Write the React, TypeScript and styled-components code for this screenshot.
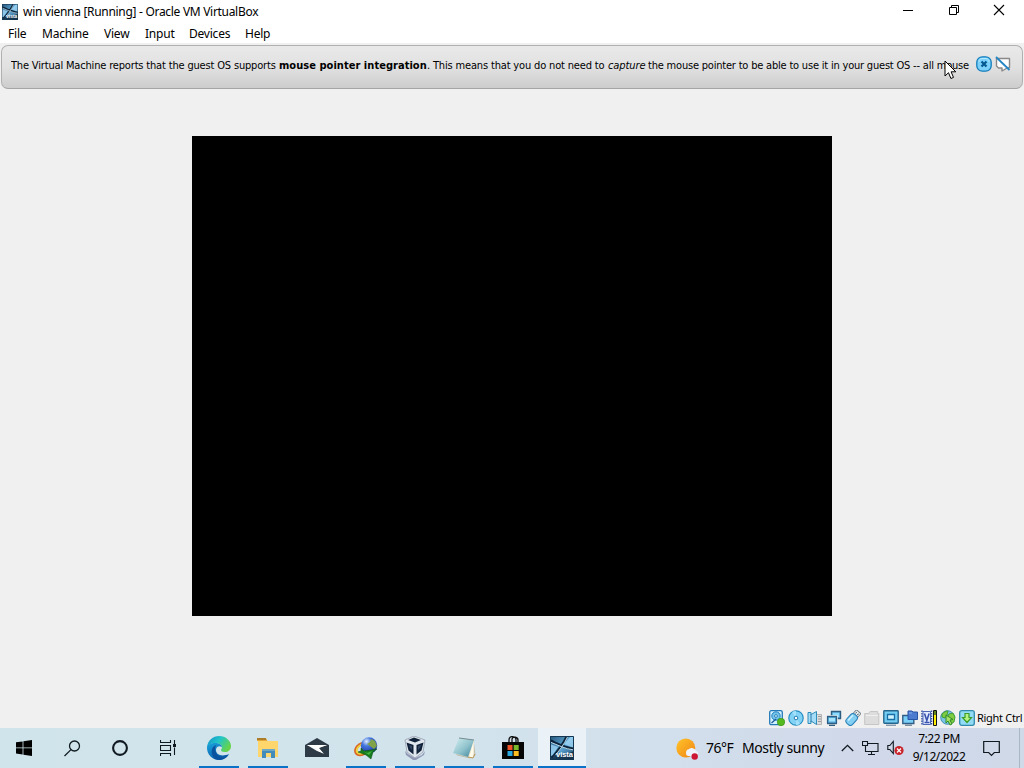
import React from 'react';
import styled, { createGlobalStyle } from 'styled-components';

const GlobalStyle = createGlobalStyle`
  * {
    box-sizing: border-box;
  }
  body {
    margin: 0;
    overflow: hidden;
    background: #f0f0f0;
    font-family: 'Noto Sans', 'Open Sans', sans-serif;
    color: #000;
  }
  svg {
    display: block;
    flex: none;
  }
`;

const Desktop = styled.div`
  width: 1024px;
  height: 768px;
  display: flex;
  flex-direction: column;
  position: relative;
  overflow: hidden;
`;

const TitleBar = styled.header`
  height: 23px;
  flex: none;
  display: flex;
  align-items: center;
  padding: 0 2px;
  background: #fff;
`;

const Title = styled.div`
  flex: 1;
  margin-left: 5px;
  font-size: 12px;
  line-height: 23px;
  letter-spacing: -0.3px;
  white-space: nowrap;
`;

const WindowButton = styled.button`
  width: 45.5px;
  height: 20px;
  margin-bottom: 3px;
  padding: 0;
  border: none;
  background: transparent;
  display: flex;
  align-items: center;
  justify-content: center;
`;

const MenuBar = styled.nav`
  height: 20px;
  flex: none;
  display: flex;
  margin-bottom: 2px;
  padding-left: 8px;
  background: #fff;
`;

const MenuItem = styled.div<{ $width: number }>`
  width: ${(p) => p.$width}px;
  font-size: 12px;
  line-height: 22px;
  letter-spacing: -0.22px;
  white-space: nowrap;
`;

const MessageBar = styled.div`
  height: 44px;
  flex: none;
  margin: 0 1px;
  padding: 0 10px 0 9px;
  display: flex;
  align-items: flex-start;
  border: 1px solid #b0b0b0;
  border-bottom-color: #a5a5a5;
  border-radius: 7px;
  background: linear-gradient(#e9e9e9, #e1e1e1 50%, #cdcdcd);
`;

const MessageText = styled.div`
  width: 965px;
  height: 38px;
  display: flex;
  overflow: hidden;
  font-family: 'DejaVu Sans Condensed', 'DejaVu Sans', sans-serif;
  font-stretch: condensed;
  font-size: 11px;
  line-height: 39px;
  white-space: nowrap;
`;

const Segment = styled.span<{ $width: number; $spacing: number; $bold?: boolean; $italic?: boolean }>`
  flex: none;
  width: ${(p) => p.$width}px;
  letter-spacing: ${(p) => p.$spacing}px;
  font-weight: ${(p) => (p.$bold ? 700 : 400)};
  font-style: ${(p) => (p.$italic ? 'italic' : 'normal')};
`;

const MessageActions = styled.div`
  display: flex;
  gap: 3px;
  padding-top: 10px;
`;

const Viewport = styled.main`
  flex: 1;
  display: flex;
  justify-content: center;
  align-items: flex-start;
  padding-top: 47px;
  background: #f0f0f0;
`;

const GuestScreen = styled.div`
  width: 640px;
  height: 480px;
  background: #000;
`;

const StatusBar = styled.div`
  height: 20px;
  flex: none;
  display: flex;
  justify-content: flex-end;
  align-items: center;
  gap: 3px;
  padding-right: 1px;
  background: #f0f0f0;
`;

const HostKey = styled.span`
  width: 46px;
  margin-left: -1px;
  font-size: 11px;
  line-height: 20px;
  letter-spacing: -0.3px;
  white-space: nowrap;
`;

const Taskbar = styled.footer`
  height: 40px;
  flex: none;
  display: flex;
  background: linear-gradient(90deg, #d0e4eb 0%, #d2e3ec 45%, #d2dfec 65%, #d0d8e9 85%, #cfd9e8 100%);
`;

const SystemButton = styled.div`
  width: 48px;
  height: 40px;
  display: flex;
  align-items: center;
  justify-content: center;
`;

const AppButton = styled.div<{ $running?: boolean; $active?: boolean }>`
  width: ${(p) => (p.$active ? 48 : 40)}px;
  margin-right: ${(p) => (p.$active ? 0 : 9)}px;
  margin-left: ${(p) => (p.$active ? -4 : 0)}px;
  height: 40px;
  padding-top: 2px;
  display: flex;
  align-items: center;
  justify-content: center;
  border-bottom: 2px solid ${(p) => (p.$running ? '#0a73c7' : 'transparent')};
  background: ${(p) => (p.$active ? '#eaf2f7' : 'transparent')};
`;

const AppList = styled.div`
  display: flex;
  flex: 1;
  padding-left: 7px;
`;

const Tray = styled.div`
  display: flex;
  align-items: center;
  width: 348px;
  height: 40px;
`;

const Weather = styled.div`
  width: 165px;
  display: flex;
  align-items: center;
  font-size: 14px;
  line-height: 42px;
  white-space: nowrap;
`;

const Temperature = styled.span`
  width: 36px;
  margin-left: 7px;
  letter-spacing: -0.5px;
`;

const Condition = styled.span`
  letter-spacing: -0.4px;
`;

const TrayIcons = styled.div`
  display: flex;
  align-items: center;
  gap: 8px;
  width: 66px;
`;

const Clock = styled.div`
  width: 64px;
  font-size: 12px;
  line-height: 18px;
  letter-spacing: -0.48px;
  text-align: center;
  white-space: nowrap;
`;

const Notifications = styled.div`
  width: 38px;
  margin-left: 1px;
  display: flex;
  justify-content: center;
`;

const ShowDesktop = styled.div`
  width: 5px;
  height: 40px;
  margin-left: auto;
  border-left: 1px solid #a9b8c6;
`;

const Pointer = styled.svg`
  position: absolute;
  left: 944px;
  top: 60px;
`;

const VistaIcon = ({ size }: { size: number }) => (
  <svg width={size} height={size} viewBox="0 0 24 24">
    <defs>
      <linearGradient id={`vista${size}`} x1="0" y1="0" x2="1" y2="1">
        <stop offset="0" stopColor="#255478" />
        <stop offset="0.5" stopColor="#5ba6d5" />
        <stop offset="1" stopColor="#173d5d" />
      </linearGradient>
    </defs>
    <rect width="24" height="24" fill={`url(#vista${size})`} />
    <path d="M0 8 8 11 2 20H0ZM14 8 21 0H24V12Z" fill="#a5daf8" opacity="0.75" />
    <path d="M0 4.5C8 8 15 12 24 13M2 22C8 15 13 9 17 0" fill="none" stroke="#0b2439" strokeWidth="2.6" />
    <path d="M0 6C8 9 15 13 24 14M3 22C9 15 14 9 18 0" fill="none" stroke="#d4efff" strokeWidth="0.9" />
    <path d="M0 20C8 18 17 19 24 15V24H0Z" fill="#102b45" opacity="0.85" />
    <text x="6" y="21" fill="#fff" fontFamily="Liberation Sans" fontSize="7.5" fontWeight="700" textLength="17">vista</text>
    <path d="M.5.5h23v23H.5z" fill="none" stroke="#143650" />
  </svg>
);

const MinimizeIcon = () => (
  <svg width="12" height="12"><path d="M1 6.5h10" stroke="#000" /></svg>
);

const RestoreIcon = () => (
  <svg width="12" height="12" fill="none" stroke="#000">
    <path d="M1.5 3.5h7v7h-7zM3.5 3.5v-2h7v7h-2" />
  </svg>
);

const CloseIcon = () => (
  <svg width="12" height="12"><path d="m1 1 10 10M11 1 1 11" stroke="#000" strokeWidth="1.1" /></svg>
);

const DismissIcon = () => (
  <svg width="16" height="16">
    <rect x="0.8" y="0.8" width="14.4" height="14.4" rx="5.5" fill="#7dd1fa" stroke="#147dbb" strokeWidth="1.3" />
    <path d="M3 6c0-2 1-3.5 3-3.5h4c2 0 3 1.5 3 3.5" fill="none" stroke="#b4e9ff" />
    <path d="m5.5 5.5 5 5M10.5 5.5l-5 5" stroke="#075a91" strokeWidth="2.3" />
  </svg>
);

const MuteMessageIcon = () => (
  <svg width="16" height="16">
    <path d="M1.5 2.5h13v9l-2.5.5-5 3v-3H3.5l-2-2z" fill="#fff" stroke="#898989" strokeWidth="1.4" strokeLinejoin="round" />
    <path d="m1 1 13.5 13" stroke="#2486c5" strokeWidth="1.8" />
  </svg>
);

const HardDiskIcon = () => (
  <svg width="16" height="16">
    <rect x="0.7" y="0.7" width="12.6" height="14" rx="1.5" fill="#d3f1ff" stroke="#247ab6" strokeWidth="1.3" />
    <circle cx="7" cy="6" r="4.2" fill="#75c6ee" stroke="#237fb9" />
    <circle cx="7" cy="6" r="1.4" fill="#fff" stroke="#237fb9" />
    <path d="M2.5 13 7 9" stroke="#1e5a99" strokeWidth="1.4" />
    <circle cx="12" cy="12" r="3.7" fill="#55ba20" stroke="#389214" strokeWidth="0.7" />
  </svg>
);

const OpticalIcon = () => (
  <svg width="16" height="16">
    <circle cx="8" cy="8" r="7.2" fill="#82d2f5" stroke="#278dc4" strokeWidth="1.2" />
    <path d="M8 8 4 2a7 7 0 0 1 4-1zM8 8l4 6a7 7 0 0 1-4 1z" fill="#a5e0fa" />
    <circle cx="8" cy="8" r="1.8" fill="#fff" stroke="#287eb2" />
  </svg>
);

const AudioIcon = () => (
  <svg width="16" height="16">
    <path d="M9.5 4.5h5v10h-5z" fill="#ddd" stroke="#b5b5b5" />
    <path d="M11 6.5h3M11 9h3M11 11.5h3" stroke="#999" />
    <path d="M1 2.5h3v2l5.5-3v13L4 11v2.5H1z" fill="#a5dcf7" stroke="#2f8dbc" />
    <path d="M4 4v8" stroke="#2d7cab" />
  </svg>
);

const NetworkIcon = () => (
  <svg width="16" height="16">
    <path d="M5.5 1.5h9v7h-9zM10 9v3" fill="#68bced" stroke="#2d5c81" strokeWidth="1.4" />
    <path d="M7 3h6v4H7z" fill="#8adbff" />
    <path d="M1.5 6.5h9v7h-9z" fill="#53aee2" stroke="#fff" strokeWidth="2.5" />
    <path d="M1.5 6.5h9v7h-9zM3 15.3h6" fill="#53aee2" stroke="#315e80" strokeWidth="1.3" />
    <path d="M3 8h6v3.5H3z" fill="#a5e2fc" />
  </svg>
);

const UsbIcon = () => (
  <svg width="16" height="16">
    <g transform="rotate(42 8 8)">
      <rect x="5" y="-0.5" width="6" height="5" fill="#f5f5f5" stroke="#7b878f" />
      <path d="M6.8 1v2M9.2 1v2" stroke="#596b77" />
      <rect x="4" y="4" width="8" height="12" rx="3" fill="#83cef3" stroke="#267eb5" />
      <path d="M6 6v7" stroke="#d2f3ff" strokeWidth="1.5" />
    </g>
  </svg>
);

const SharedFolderIcon = () => (
  <svg width="16" height="16">
    <path d="M.7 3.5h4l1.4-2h7.5v2h1.2v11H.7z" fill="#ddd" stroke="#c6c6c6" />
    <path d="M2 5.5h12" stroke="#efefef" />
  </svg>
);

const DisplayIcon = () => (
  <svg width="16" height="16">
    <rect x="0.8" y="0.8" width="14.4" height="12.4" rx="0.7" fill="#74cdf3" stroke="#26658e" strokeWidth="1.4" />
    <path d="M4.5 4.5h7v5h-7z" fill="#d0f4ff" stroke="#176da5" strokeWidth="1.3" />
    <path d="M3 15.2h10" stroke="#53768e" />
  </svg>
);

const RecordingIcon = () => (
  <svg width="16" height="16">
    <path d="M.8 5.5h11v8H.8z" fill="#7bd0f7" stroke="#315d86" strokeWidth="1.4" />
    <path d="M3 15.2h7" stroke="#45647b" />
    <path d="M6 1h4l1 1h4.5v7.5H6z" fill="#4c7bd0" stroke="#2855a6" />
    <path d="M7 3h3" stroke="#86b6ef" />
  </svg>
);

const CpuIcon = () => (
  <svg width="16" height="16">
    <path d="M1 .5v15M10.5.5v15" stroke="#354fa0" strokeWidth="1.5" strokeDasharray="1.5 1" />
    <path d="M2 1.5h7.5v13H2z" fill="#e2eaff" stroke="#4d66b5" />
    <path d="m3.5 3.5 2.3 7 2.3-7M3.5 12.5h5" fill="none" stroke="#3952ad" strokeWidth="1.6" />
    <path d="M12.5.5h3v15h-3z" fill="#ffed00" stroke="#141414" />
    <path d="M13 1h2v4h-2z" fill="#64821b" />
  </svg>
);

const MouseIntegrationIcon = () => (
  <svg width="16" height="16">
    <circle cx="7.5" cy="7.5" r="6.8" fill="#78c3e6" stroke="#458fb3" />
    <path d="M2 4c2-2 4-3 6-3l-1 4-2 3-3-1zM9 4l4-1 2 4-1 5-3 2-1-4-3-2z" fill="#7dcc43" stroke="#3c9a2b" strokeWidth="0.9" />
    <path d="M6 5v8l2-2 2 4 2-1-2-4 3-.5z" fill="#a5e067" stroke="#308c2a" />
  </svg>
);

const KeyboardCaptureIcon = () => (
  <svg width="16" height="16">
    <rect x="0.7" y="0.7" width="14.6" height="14.6" rx="2" fill="#91dcf4" stroke="#318bae" strokeWidth="1.3" />
    <path d="M6 3.5h4v4h2.5L8 12.5 3.5 7.5H6z" fill="#b6f27f" stroke="#3c9d29" strokeWidth="1.2" />
  </svg>
);

const StartIcon = () => (
  <svg width="16" height="16">
    <path d="M0 2.3 6.6 1.4v6.1H0zM7.4 1.3 16 0v7.5H7.4zM0 8.3h6.6v6.2L0 13.6zM7.4 8.3H16V16l-8.6-1.3z" />
  </svg>
);

const SearchIcon = () => (
  <svg width="17" height="17" fill="none" stroke="#101b20" strokeWidth="1.3">
    <circle cx="10.5" cy="6" r="5" /><path d="M7 9.6.5 16" />
  </svg>
);

const CortanaIcon = () => (
  <svg width="18" height="18"><circle cx="9" cy="9" r="6.9" fill="none" stroke="#101820" strokeWidth="2.1" /></svg>
);

const TaskViewIcon = () => (
  <svg width="17" height="16" fill="none" stroke="#101820" strokeWidth="1.1">
    <path d="M.5 0v2.5h10V0M.5 5.5h10v5H.5zM.5 16v-2.5h10V16M14.5 0v4M14.5 7.5V15" />
    <path d="M13 4h3v3h-3z" fill="#101820" stroke="none" />
  </svg>
);

const EdgeIcon = () => (
  <svg width="24" height="24" viewBox="0 0 24 24">
    <defs>
      <linearGradient id="edgeTop" x1="0" y1="0" x2="1" y2="0.5">
        <stop offset="0" stopColor="#1589c7" /><stop offset="0.5" stopColor="#20c5ca" /><stop offset="1" stopColor="#66d34b" />
      </linearGradient>
      <linearGradient id="edgeBottom" x1="0" y1="0" x2="0.6" y2="1">
        <stop stopColor="#18a5dd" /><stop offset="1" stopColor="#0c55a4" />
      </linearGradient>
    </defs>
    <path d="M0 11C1 4 6 0 12 0c7 0 12 5 12 10 0 4-3 6-6 6-3 0-4-1-4-2 0-1 1-1 1-3 0-2-3-4-7-4-3 0-6 1-8 4Z" fill="url(#edgeTop)" />
    <path d="M0 11c1-3 4-4 8-4 4 0 7 2 7 4-3-2-6 0-6 3 0 5 6 7 13 4-2 4-6 6-10 6C5 24 0 18 0 12Z" fill="url(#edgeBottom)" />
    <path d="M9 9c-5 2-6 9-1 14 3 1 7 1 10-1-7 0-12-7-9-13Z" fill="#0b529e" />
  </svg>
);

const ExplorerIcon = () => (
  <svg width="24" height="22" viewBox="0 0 24 22">
    <path d="M1 2V1h9l1.5 3H22v16H3L2 4H1z" fill="#e5a93b" />
    <path d="M2 4h20v16H2z" fill="#ffd66c" />
    <path d="M1 1h9v2H1z" fill="#ad7d27" />
    <path d="M6 12h13v9h-4v-5h-5v5H6z" fill="#438bb8" /><path d="M6 12h13v2H6z" fill="#6ca8c6" />
  </svg>
);

const MailIcon = () => (
  <svg width="24" height="22" viewBox="0 0 24 22">
    <path d="M0 8 12 1l12 7v12H0z" fill="#2e3b47" />
    <path d="M2 8h20l-9 3 5 5-6-2z" fill="#f5f8fa" />
    <path d="m2 8 10 4 1 2 6 3-5-6 8-3z" fill="#fff" />
  </svg>
);

const DownloadManagerIcon = () => (
  <svg width="24" height="23" viewBox="0 0 24 23">
    <defs>
      <radialGradient id="globe" cx="0.35" cy="0.25" r="0.8">
        <stop stopColor="#e2f0ff" /><stop offset="0.35" stopColor="#4778df" /><stop offset="1" stopColor="#16309b" />
      </radialGradient>
    </defs>
    <ellipse cx="8" cy="12" rx="7" ry="5" transform="rotate(-35 8 12)" fill="none" stroke="#d96727" strokeWidth="3" />
    <ellipse cx="8" cy="12" rx="5.8" ry="4" transform="rotate(-35 8 12)" fill="none" stroke="#efd43d" strokeWidth="2" />
    <circle cx="15" cy="8.5" r="8.2" fill="url(#globe)" />
    <path d="m17 2 4 2 2 5-3 3-4-3-3-2 3-2z" fill="#80a348" />
    <path d="M7 11l3 3 7-1 6-1-4 3-2 7-5-4-8-3 3-1z" fill="#177b20" stroke="#07500c" strokeWidth="0.5" />
    <path d="m9 14 4 2 5-2-3 4z" fill="#43b83d" />
  </svg>
);

const VirtualBoxIcon = () => (
  <svg width="24" height="24" viewBox="0 0 24 24">
    <path d="m2 15 3 3 7 4 7-3 3-4-1 4-8 5h-3l-7-5z" fill="#9299b6" />
    <path d="m2 4 9-4 11 4-2 12-8 6-8-6z" fill="#e0e7ee" stroke="#7c889b" strokeWidth="0.6" />
    <path d="m5 4 6-2.5L18 4l-6 2.5zM3.5 6.5 10.5 9v9.5l-5-4zM20.5 6.5 13.5 9v9.5l5-4z" fill="#102239" />
    <path d="m6 9 3 1v4l-2-2zM18 9l-3 1v4l2-2z" fill="#31435e" />
  </svg>
);

const NotepadIcon = () => (
  <svg width="24" height="24" viewBox="0 0 24 24">
    <defs>
      <linearGradient id="paper" x1="0" y1="0" x2="1" y2="1">
        <stop stopColor="#d4f0f1" /><stop offset="0.55" stopColor="#8fc2cc" /><stop offset="1" stopColor="#388097" />
      </linearGradient>
    </defs>
    <path d="m5 18 16-14 2 15-5 3-13-3z" fill="#e9e3cf" stroke="#a49778" strokeWidth="0.5" />
    <path d="m7 2 15 2-6 17-15-4z" fill="url(#paper)" />
    <path d="m22 4-1 17-4 1z" fill="#fffbea" />
    <path d="m7 2 15 2" stroke="#758d91" /><path d="m16 21 5 1 2-4" fill="none" stroke="#bd9955" />
  </svg>
);

const StoreIcon = () => (
  <svg width="24" height="24" viewBox="0 0 24 24">
    <path d="M8 7V4c0-5 7-4 7 0v3M11 7V3c1-3 6-2 6 1v3" fill="none" stroke="#101010" strokeWidth="1.3" />
    <path d="M1 6h22v17H1z" fill="#050505" />
    <path d="M6.5 9h5v5h-5z" fill="#ed5229" /><path d="M12.7 9h5v5h-5z" fill="#7ab82b" />
    <path d="M6.5 15h5v5h-5z" fill="#2ba9e1" /><path d="M12.7 15h5v5h-5z" fill="#fbbe22" />
  </svg>
);

const WeatherIcon = () => (
  <svg width="23" height="23" viewBox="0 0 23 23">
    <defs>
      <linearGradient id="sun" x1="0" y1="0" x2="1" y2="1">
        <stop stopColor="#ffc329" /><stop offset="1" stopColor="#ef8516" />
      </linearGradient>
    </defs>
    <circle cx="9.8" cy="11" r="9.5" fill="url(#sun)" />
    <path d="M12 19a3.7 3.7 0 0 1 1-7 4.5 4.5 0 0 1 7 2c2.5.5 3 4 0 5z" fill="#eef3fb" />
    <circle cx="18.7" cy="19.5" r="3.2" fill="#cd1534" />
  </svg>
);

const ChevronIcon = () => (
  <svg width="13" height="8"><path d="m.8 7 5.7-5.7L12.2 7" fill="none" stroke="#101820" strokeWidth="1.3" /></svg>
);

const EthernetIcon = () => (
  <svg width="17" height="15" fill="none" stroke="#101820">
    <path d="M5.5 2.5h10.5v8H3.5V6M6 13.5h7M9.5 10.5v3M.5.5h5v4h-5zM3.5 4.5v2" strokeWidth="1.1" />
  </svg>
);

const VolumeIcon = () => (
  <svg width="17" height="16">
    <path d="M.8 5.5h2l3.5-4v12l-3.5-4h-2z" fill="none" stroke="#101820" strokeWidth="1.1" />
    <circle cx="12" cy="10.5" r="4.6" fill="#ca242c" />
    <path d="m10 8.5 4 4M14 8.5l-4 4" stroke="#fff" strokeWidth="1.2" />
  </svg>
);

const NotificationIcon = () => (
  <svg width="17" height="17">
    <path d="M.7 1.5h15.6v11h-5L8.5 15.3 5.7 12.5h-5z" fill="none" stroke="#101820" strokeWidth="1.2" />
  </svg>
);

const menus = [
  { label: 'File', width: 34 },
  { label: 'Machine', width: 62 },
  { label: 'View', width: 41 },
  { label: 'Input', width: 44 },
  { label: 'Devices', width: 56 },
  { label: 'Help', width: 30 },
];

const App: React.FC = () => (
  <>
    <GlobalStyle />
    <Desktop>
      <TitleBar>
        <VistaIcon size={16} />
        <Title>win vienna [Running] - Oracle VM VirtualBox</Title>
        <WindowButton aria-label="Minimize"><MinimizeIcon /></WindowButton>
        <WindowButton aria-label="Restore"><RestoreIcon /></WindowButton>
        <WindowButton aria-label="Close"><CloseIcon /></WindowButton>
      </TitleBar>
      <MenuBar>
        {menus.map((m) => (
          <MenuItem key={m.label} $width={m.width}>{m.label}</MenuItem>
        ))}
      </MenuBar>
      <MessageBar>
        <MessageText>
          <Segment $width={268} $spacing={-0.17}>The Virtual Machine reports that the guest OS supports</Segment>
          <Segment $width={148} $spacing={0.04} $bold>mouse pointer integration</Segment>
          <Segment $width={181} $spacing={-0.16}>. This means that you do not need to</Segment>
          <Segment $width={40} $spacing={-0.1} $italic>capture</Segment>
          <Segment $width={324} $spacing={-0.2}>the mouse pointer to be able to use it in your guest OS -- all mouse</Segment>
        </MessageText>
        <MessageActions>
          <DismissIcon />
          <MuteMessageIcon />
        </MessageActions>
      </MessageBar>
      <Viewport>
        <GuestScreen />
      </Viewport>
      <StatusBar>
        <HardDiskIcon />
        <OpticalIcon />
        <AudioIcon />
        <NetworkIcon />
        <UsbIcon />
        <SharedFolderIcon />
        <DisplayIcon />
        <RecordingIcon />
        <CpuIcon />
        <MouseIntegrationIcon />
        <KeyboardCaptureIcon />
        <HostKey>Right Ctrl</HostKey>
      </StatusBar>
      <Taskbar>
        <SystemButton><StartIcon /></SystemButton>
        <SystemButton><SearchIcon /></SystemButton>
        <SystemButton><CortanaIcon /></SystemButton>
        <SystemButton><TaskViewIcon /></SystemButton>
        <AppList>
          <AppButton $running><EdgeIcon /></AppButton>
          <AppButton $running><ExplorerIcon /></AppButton>
          <AppButton><MailIcon /></AppButton>
          <AppButton $running><DownloadManagerIcon /></AppButton>
          <AppButton $running><VirtualBoxIcon /></AppButton>
          <AppButton $running><NotepadIcon /></AppButton>
          <AppButton $running><StoreIcon /></AppButton>
          <AppButton $running $active><VistaIcon size={24} /></AppButton>
        </AppList>
        <Tray>
          <Weather>
            <WeatherIcon />
            <Temperature>76°F</Temperature>
            <Condition>Mostly sunny</Condition>
          </Weather>
          <TrayIcons>
            <ChevronIcon />
            <EthernetIcon />
            <VolumeIcon />
          </TrayIcons>
          <Clock>
            <div>7:22 PM</div>
            <div>9/12/2022</div>
          </Clock>
          <Notifications><NotificationIcon /></Notifications>
          <ShowDesktop />
        </Tray>
      </Taskbar>
      <Pointer width="13" height="20">
        <path d="M1 1v15l3.5-3.3 2.4 5.8 2.6-1.1-2.4-5.6h4.7z" fill="#fff" stroke="#000" />
      </Pointer>
    </Desktop>
  </>
);

export default App;
